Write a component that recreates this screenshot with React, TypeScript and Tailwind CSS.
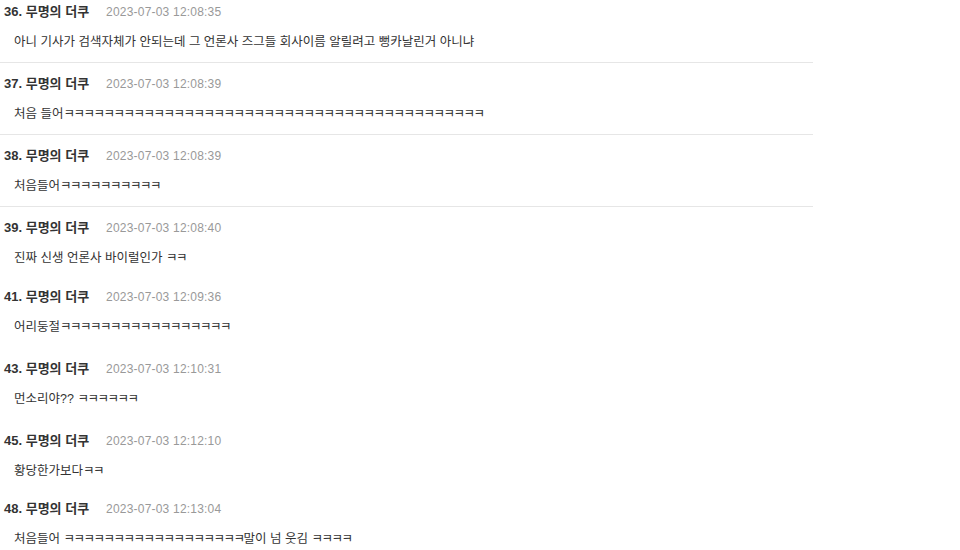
const KR = "font-['Liberation_Sans','Noto_Sans_CJK_KR',sans-serif]";

type Comment = {
  no: number;
  time: string;
  body: string;
  divider?: boolean;
  h: string;
};

const k = (n: number) => "ㅋ".repeat(n);

const comments: Comment[] = [
  { no: 36, time: "2023-07-03 12:08:35", body: "아니 기사가 검색자체가 안되는데 그 언론사 즈그들 회사이름 알릴려고 뻥카날린거 아니냐", divider: true, h: "h-[72px]" },
  { no: 37, time: "2023-07-03 12:08:39", body: "처음 들어" + k(42), divider: true, h: "h-[72px]" },
  { no: 38, time: "2023-07-03 12:08:39", body: "처음들어" + k(10), divider: true, h: "h-[72px]" },
  { no: 39, time: "2023-07-03 12:08:40", body: "진짜 신생 언론사 바이럴인가 " + k(2), h: "h-[69px]" },
  { no: 41, time: "2023-07-03 12:09:36", body: "어리둥절" + k(17), h: "h-[72px]" },
  { no: 43, time: "2023-07-03 12:10:31", body: "먼소리야?? " + k(6), h: "h-[72px]" },
  { no: 45, time: "2023-07-03 12:12:10", body: "황당한가보다" + k(2), h: "h-[68px]" },
  { no: 48, time: "2023-07-03 12:13:04", body: "처음들어 " + k(18) + "말이 넘 웃김 " + k(4), h: "h-[72px]" },
];

// ㅋ runs are set narrower, like the source font's jamo
function Body({ text }: { text: string }) {
  const parts = text.split(/(ㅋ+)/);
  return (
    <p className="pl-[14px] text-[12.5px] leading-[18px] text-[#333] whitespace-nowrap">
      {parts.map((p, i) =>
        p.startsWith("ㅋ") ? (
          <span key={i} className="tracking-[-1.5px]">
            {p}
          </span>
        ) : (
          <span key={i}>{p}</span>
        )
      )}
    </p>
  );
}

function CommentItem({ c }: { c: Comment }) {
  return (
    <div className={`${c.h} shrink-0 pt-[12px] ${c.divider ? "border-b border-[#e6e6e6]" : ""}`}>
      <div className="flex items-center h-[18px] pl-[4px]">
        <span className="text-[13px] font-bold text-[#333]">
          {c.no}. 무명의 더쿠
        </span>
        <span className="ml-[17px] text-[12px] tracking-[0.2px] text-[#999]">{c.time}</span>
      </div>
      <div className="mt-[12px]">
        <Body text={c.body} />
      </div>
    </div>
  );
}

export default function App() {
  return (
    <div className={`w-[960px] h-[550px] overflow-hidden bg-white ${KR}`}>
      <div className="w-[813px] -mt-[9px] flex flex-col">
        {comments.map((c) => (
          <CommentItem key={c.no} c={c} />
        ))}
      </div>
    </div>
  );
}
